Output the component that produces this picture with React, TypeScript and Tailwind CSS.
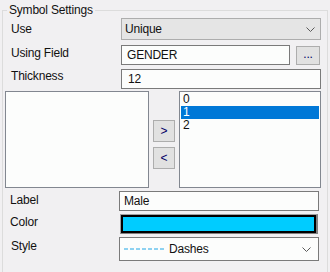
import React from "react";

const font = { fontFamily: '"Liberation Sans", Arial, sans-serif' };

function Chevron() {
  return (
    <svg width="9" height="5" viewBox="0 0 9 5" fill="none" stroke="#5a5a5a" strokeWidth="1">
      <path d="M0.5 0.5L4.5 4.5L8.5 0.5" />
    </svg>
  );
}

export default function App() {
  return (
    <div
      className="w-[330px] h-[272px] bg-[#f1f0f2] text-[12px] tracking-[-0.2px] text-[#111] overflow-hidden px-[2px] pt-[2px]"
      style={font}
    >
      <fieldset className="border border-[#dcdcdc] h-[290px] pr-[6px]">
        <legend className="ml-[4px] px-[2px] leading-[16px]">Symbol Settings</legend>

        {/* Use */}
        <div className="flex h-[22px]">
          <div className="w-[118px] pl-[8px] pt-[4px] leading-[14px]">Use</div>
          <div className="flex-1 flex items-center justify-between bg-[#e5e5e5] border border-[#adadad] pl-[3px] pr-[5px]">
            <span>Unique</span>
            <Chevron />
          </div>
        </div>

        {/* Using Field */}
        <div className="flex h-[20px] mt-[5px]">
          <div className="w-[118px] pl-[8px] pt-[1px] leading-[14px]">Using Field</div>
          <div className="flex-1 flex items-center bg-[#fcfdfc] border border-[#7a7a7a] pl-[5px]">GENDER</div>
          <div className="w-[24px] ml-[6px] mt-[1px] h-[19px] bg-[#e1e1e1] border border-[#adadad] flex items-center justify-center text-[#000066] leading-none pb-[3px] mr-[1px]">
            ...
          </div>
        </div>

        {/* Thickness */}
        <div className="flex h-[20px] mt-[4px]">
          <div className="w-[118px] pl-[8px] pt-[0px] leading-[14px]">Thickness</div>
          <div className="flex-1 flex items-center bg-[#fcfdfc] border border-[#7a7a7a] pl-[6px]">12</div>
        </div>

        {/* Lists */}
        <div className="flex h-[97px] mt-[2px] ml-[2px]">
          <div className="w-[144px] bg-[#fcfdfc] border border-[#828790]" />
          <div className="w-[30px] flex flex-col items-center pt-[29px] gap-[5px]">
            <div className="w-[22px] h-[22px] bg-[#e1e1e1] border border-[#adadad] flex items-center justify-center text-[#000066]">&gt;</div>
            <div className="w-[22px] h-[22px] bg-[#e1e1e1] border border-[#adadad] flex items-center justify-center text-[#000066]">&lt;</div>
          </div>
          <div className="flex-1 bg-[#fcfdfc] border border-[#828790] p-[1px] leading-[13px]">
            <div className="pl-[2px]">0</div>
            <div className="pl-[2px] bg-[#0078d7] text-white">1</div>
            <div className="pl-[2px]">2</div>
          </div>
        </div>

        {/* Label */}
        <div className="flex h-[20px] mt-[3px]">
          <div className="w-[116px] pl-[7px] pt-[2px] leading-[14px]">Label</div>
          <div className="flex-1 flex items-center bg-[#fcfdfc] border border-[#7a7a7a] pl-[4px] mr-[2px]">Male</div>
        </div>

        {/* Color */}
        <div className="flex h-[20px] mt-[3px]">
          <div className="w-[117px] pl-[7px] pt-[1px] leading-[14px]">Color</div>
          <div className="flex-1 border border-[#a0a0a0] mr-[3px] border-r-[2px] border-r-[#808080] border-b-[#808080]">
            <div className="h-full border-[2px] border-black bg-[#00ccff]" />
          </div>
        </div>

        {/* Style */}
        <div className="flex h-[24px] mt-[3px]">
          <div className="w-[116px] pl-[8px] pt-[2px] leading-[14px]">Style</div>
          <div className="flex-1 flex items-center bg-[#fcfdfc] border border-[#7a7a7a] pl-[4px] pr-[7px] mr-[2px]">
            <svg width="40" height="2" viewBox="0 0 40 2">
              <line x1="0" y1="1" x2="40" y2="1" stroke="#1ea6e6" strokeWidth="1" strokeDasharray="4 2" />
            </svg>
            <span className="ml-[5px] flex-1">Dashes</span>
            <Chevron />
          </div>
        </div>
      </fieldset>
    </div>
  );
}
